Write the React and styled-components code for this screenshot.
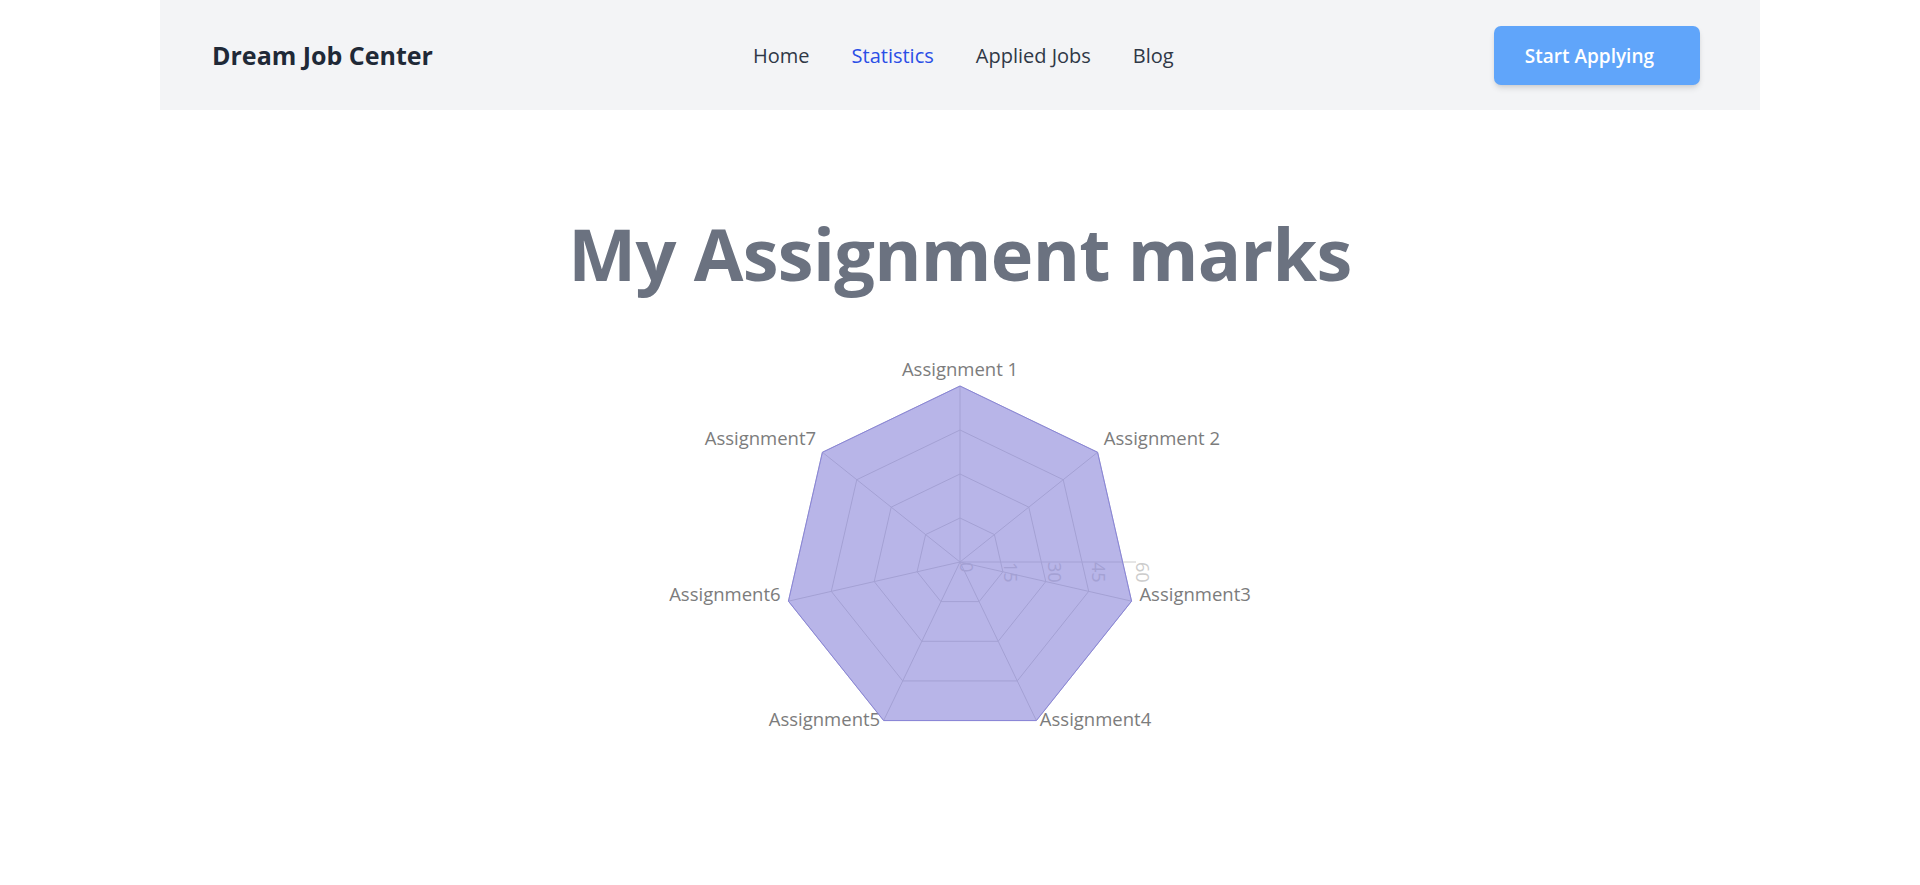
import React from "react";
import styled, { createGlobalStyle } from "styled-components";

const Global = createGlobalStyle`
  html, body { margin: 0; padding: 0; background: #ffffff; }
  body { font-family: "Open Sans", "Noto Sans", sans-serif; }
  * { box-sizing: border-box; }
`;

const Header = styled.header`
  width: 1600px;
  margin: 0 auto;
  height: 110px;
  background: #f3f4f6;
  display: flex;
  align-items: center;
  justify-content: space-between;
  padding: 0 60px 0 52px;
`;

const Logo = styled.div`
  font-size: 25px;
  font-weight: 700;
  color: #1f2937;
`;

const Nav = styled.nav`
  display: flex;
  gap: 42px;
`;

const NavLink = styled.a`
  font-size: 20px;
  font-weight: 500;
  color: ${(p) => (p.$active ? "#2a4ee6" : "#2f3846")};
  text-decoration: none;
  cursor: pointer;
`;

const Button = styled.button`
  font-family: inherit;
  font-size: 19px;
  font-weight: 600;
  color: #ffffff;
  background: #60a5fa;
  border: none;
  border-radius: 7px;
  padding: 0 46px 0 31px;
  height: 59px;
  margin-top: 1px;
  box-shadow: 0 4px 6px -1px rgba(0, 0, 0, 0.12), 0 2px 4px -2px rgba(0, 0, 0, 0.1);
  cursor: pointer;
`;

const Main = styled.main`
  display: flex;
  flex-direction: column;
  align-items: center;
`;

const Title = styled.h1`
  margin: 105px 0 0;
  font-size: 72px;
  line-height: 76px;
  letter-spacing: -0.7px;
  font-weight: 700;
  color: #6b7280;
`;

const ChartWrap = styled.div`
  margin-top: 51px;
  width: 600px;
  height: 440px;
`;

const AxisLabel = styled.text`
  font-size: 18.5px;
  fill: #7c7c7c;
  font-family: "Open Sans", "Noto Sans", sans-serif;
`;

const TickLabel = styled.text`
  font-size: 18px;
  fill: #cccccc;
  font-family: "Open Sans", "Noto Sans", sans-serif;
`;

const labels = [
  "Assignment 1",
  "Assignment 2",
  "Assignment3",
  "Assignment4",
  "Assignment5",
  "Assignment6",
  "Assignment7",
];
const data = [60, 60, 60, 60, 60, 60, 60];

const CX = 300;
const CY = 220;
const R = 176;
const MAX = 60;
const ticks = [0, 15, 30, 45, 60];

const rad = (deg) => (deg * Math.PI) / 180;
const angleOf = (i) => 90 - (i * 360) / labels.length;
const pt = (r, deg) => [CX + r * Math.cos(rad(deg)), CY - r * Math.sin(rad(deg))];
const poly = (r) =>
  labels.map((_, i) => pt(r, angleOf(i)).map((v) => v.toFixed(2)).join(",")).join(" ");

function Radar() {
  const dataPts = data
    .map((v, i) => pt((v / MAX) * R, angleOf(i)).map((n) => n.toFixed(2)).join(","))
    .join(" ");
  return (
    <svg width="600" height="440" viewBox="0 0 600 440">
      <g stroke="#cccccc" fill="none" strokeWidth="1">
        {ticks.map((t) => (
          <polygon key={t} points={poly((t / MAX) * R)} />
        ))}
        {labels.map((_, i) => {
          const [x, y] = pt(R, angleOf(i));
          return <line key={i} x1={CX} y1={CY} x2={x} y2={y} />;
        })}
      </g>
      {labels.map((l, i) => {
        const a = angleOf(i);
        const c = Math.cos(rad(a));
        const anchor = c > 1e-5 ? "start" : c < -1e-5 ? "end" : "middle";
        const [x, y] = pt(R + 8, a);
        return (
          <AxisLabel key={l} x={x} y={y - 2} textAnchor={anchor}>
            {l}
          </AxisLabel>
        );
      })}
      <line x1={CX} y1={CY} x2={CX + R} y2={CY} stroke="#cccccc" />
      {ticks.map((t) => {
        const x = CX + (t / MAX) * R;
        return (
          <TickLabel key={t} x={x} y={CY} transform={`rotate(90, ${x}, ${CY})`} textAnchor="start">
            {t}
          </TickLabel>
        );
      })}
      <polygon points={dataPts} fill="#8884d8" fillOpacity="0.6" stroke="#8884d8" strokeWidth="1" />
    </svg>
  );
}

export default function App() {
  return (
    <>
      <Global />
      <Header>
        <Logo>Dream Job Center</Logo>
        <Nav>
          <NavLink>Home</NavLink>
          <NavLink $active>Statistics</NavLink>
          <NavLink>Applied Jobs</NavLink>
          <NavLink>Blog</NavLink>
        </Nav>
        <Button>Start Applying</Button>
      </Header>
      <Main>
        <Title>My Assignment marks</Title>
        <ChartWrap>
          <Radar />
        </ChartWrap>
      </Main>
    </>
  );
}
